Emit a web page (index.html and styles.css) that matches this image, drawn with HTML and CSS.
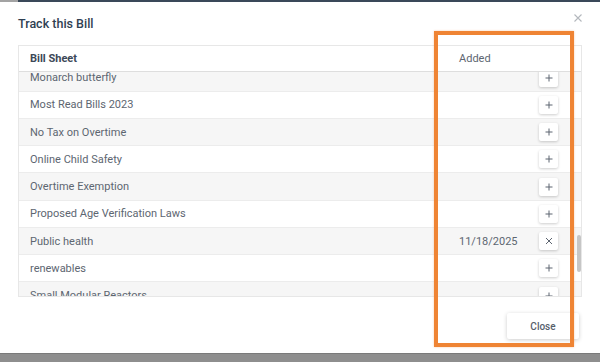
FILE: index.html
```html
<!DOCTYPE html>
<html lang="en">
<head>
<meta charset="utf-8">
<title>Track this Bill</title>
<link rel="stylesheet" href="styles.css">
</head>
<body>
<div class="screen">
  <div class="topbar"><span class="topbar-left"></span></div>
  <div class="modal">
    <div class="modal-head">
      <h2 class="title">Track this Bill</h2>
      <button class="dismiss" aria-label="Close">
        <svg width="8" height="8" viewBox="0 0 8 8"><path d="M0.5 0.5L7.5 7.5M7.5 0.5L0.5 7.5" stroke="#b4b8bd" stroke-width="1.1" fill="none"/></svg>
      </button>
    </div>
    <div class="sheet">
      <div class="row row-head"><span class="col-name">Bill Sheet</span><span class="col-date">Added</span><span></span></div>
      <div class="viewport">
        <div class="rows">
          <div class="row alt"><span class="col-name">Monarch butterfly</span><span class="col-date"></span><button class="act"><svg width="8" height="8" viewBox="0 0 8 8"><path d="M4 0.5V7.5M0.5 4H7.5" stroke="#5d6570" stroke-width="1" fill="none"/></svg></button></div>
          <div class="row"><span class="col-name">Most Read Bills 2023</span><span class="col-date"></span><button class="act"><svg width="8" height="8" viewBox="0 0 8 8"><path d="M4 0.5V7.5M0.5 4H7.5" stroke="#5d6570" stroke-width="1" fill="none"/></svg></button></div>
          <div class="row alt"><span class="col-name">No Tax on Overtime</span><span class="col-date"></span><button class="act"><svg width="8" height="8" viewBox="0 0 8 8"><path d="M4 0.5V7.5M0.5 4H7.5" stroke="#5d6570" stroke-width="1" fill="none"/></svg></button></div>
          <div class="row"><span class="col-name">Online Child Safety</span><span class="col-date"></span><button class="act"><svg width="8" height="8" viewBox="0 0 8 8"><path d="M4 0.5V7.5M0.5 4H7.5" stroke="#5d6570" stroke-width="1" fill="none"/></svg></button></div>
          <div class="row alt"><span class="col-name">Overtime Exemption</span><span class="col-date"></span><button class="act"><svg width="8" height="8" viewBox="0 0 8 8"><path d="M4 0.5V7.5M0.5 4H7.5" stroke="#5d6570" stroke-width="1" fill="none"/></svg></button></div>
          <div class="row"><span class="col-name">Proposed Age Verification Laws</span><span class="col-date"></span><button class="act"><svg width="8" height="8" viewBox="0 0 8 8"><path d="M4 0.5V7.5M0.5 4H7.5" stroke="#5d6570" stroke-width="1" fill="none"/></svg></button></div>
          <div class="row alt"><span class="col-name">Public health</span><span class="col-date">11/18/2025</span><button class="act"><svg width="8" height="8" viewBox="0 0 8 8"><path d="M1 1L7 7M7 1L1 7" stroke="#5d6570" stroke-width="1" fill="none"/></svg></button></div>
          <div class="row"><span class="col-name">renewables</span><span class="col-date"></span><button class="act"><svg width="8" height="8" viewBox="0 0 8 8"><path d="M4 0.5V7.5M0.5 4H7.5" stroke="#5d6570" stroke-width="1" fill="none"/></svg></button></div>
          <div class="row alt"><span class="col-name">Small Modular Reactors</span><span class="col-date"></span><button class="act"><svg width="8" height="8" viewBox="0 0 8 8"><path d="M4 0.5V7.5M0.5 4H7.5" stroke="#5d6570" stroke-width="1" fill="none"/></svg></button></div>
        </div>
        <div class="thumb"></div>
      </div>
    </div>
    <div class="modal-foot">
      <button class="close-btn">Close</button>
    </div>
  </div>
  <div class="backdrop"></div>
  <div class="highlight"></div>
</div>
</body>
</html>
```

FILE: styles.css
```css
* { box-sizing: border-box; }
html, body { margin: 0; padding: 0; }
body {
  width: 600px;
  height: 362px;
  overflow: hidden;
  font-family: Roboto, "Liberation Sans", Arial, sans-serif;
  background: #8e8e8e;
}
.screen {
  position: relative;
  width: 600px;
  height: 362px;
  display: flex;
  flex-direction: column;
}
.topbar {
  height: 2px;
  background: #3a4859;
  display: flex;
}
.topbar-left {
  width: 18px;
  background: #a3a3a3;
}
.modal {
  height: 351px;
  background: #fff;
  display: flex;
  flex-direction: column;
}
.modal-head {
  height: 43px;
  display: flex;
  justify-content: space-between;
  align-items: flex-start;
  padding: 0 18px 0 18px;
}
.title {
  margin: 14px 0 0 0;
  font-size: 12.5px;
  line-height: 16px;
  font-weight: 500;
  color: #2f3f52;
}
.dismiss {
  margin: 12px 0 0 0;
  padding: 0;
  border: 0;
  background: none;
  width: 8px;
  height: 8px;
  display: block;
}
.dismiss svg { display: block; }
.sheet {
  margin: 0 18px;
  height: 252px;
  border: 1px solid #e7e7e7;
  display: flex;
  flex-direction: column;
}
.row {
  display: grid;
  grid-template-columns: 1fr 80px 19px;
  align-items: center;
  padding: 0 23px 0 11px;
  height: 27.25px;
  border-bottom: 1px solid #ececec;
  font-size: 11px;
  color: #5d6671;
  background: #fff;
}
.row.alt { background: #f6f6f6; }
.row-head {
  height: 26px;
  border-bottom: 1px solid #dedede;
  flex: none;
}
.row-head .col-name {
  font-weight: 700;
  color: #3c4857;
}
.row-head .col-date { color: #5d6671; }
.col-name, .col-date { white-space: nowrap; }
.viewport {
  position: relative;
  flex: 1;
  overflow: hidden;
}
.rows { margin-top: -7.55px; }
.act {
  width: 19px;
  height: 18px;
  padding: 0;
  border: 0;
  border-radius: 2px;
  background: #fff;
  box-shadow: 0 1px 3px rgba(0, 0, 0, 0.2);
  display: grid;
  place-items: center;
}
.act svg { display: block; }
.thumb {
  position: absolute;
  right: 0;
  top: 163px;
  width: 4px;
  height: 37px;
  border-radius: 2px;
  background: #c6c6c6;
}
.modal-foot {
  flex: 1;
  display: flex;
  justify-content: flex-end;
  align-items: flex-start;
  padding: 16px 21px 0 0;
}
.close-btn {
  width: 72px;
  height: 26px;
  border: 0;
  border-radius: 2px;
  background: #fff;
  box-shadow: 0 1px 4px rgba(0, 0, 0, 0.2);
  font-family: Roboto, "Liberation Sans", Arial, sans-serif;
  font-size: 10px;
  font-weight: 500;
  color: #56606b;
  padding: 0;
}
.backdrop {
  flex: 1;
  background: #8e8e8e;
  border-top: 1px solid #7a7a7a;
}
.highlight {
  position: absolute;
  left: 434px;
  top: 31px;
  width: 140px;
  height: 316px;
  border: 4px solid #ef8434;
  box-shadow: 0 0 2px rgba(239, 132, 52, 0.4);
}
```
